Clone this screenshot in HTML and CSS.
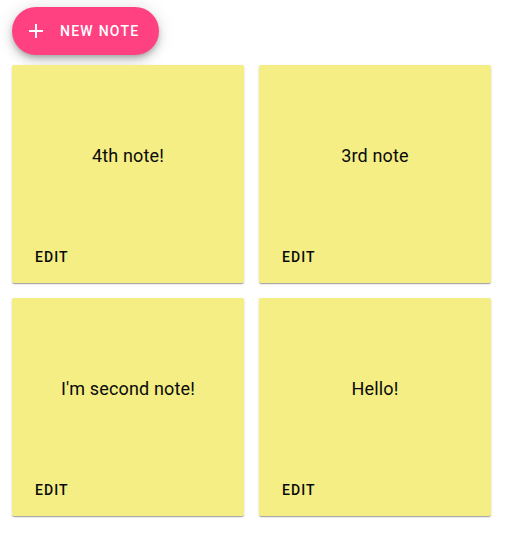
FILE: index.html
```html
<!DOCTYPE html>
<html>
<head>
<meta charset="utf-8">
<link rel="stylesheet" href="styles.css">
</head>
<body>
<div class="app">
  <button class="fab">
    <svg class="fab-icon" viewBox="0 0 24 24" width="24" height="24"><path d="M19 13h-6v6h-2v-6H5v-2h6V5h2v6h6v2z" fill="#fff"/></svg>
    <span>New note</span>
  </button>
  <div class="notes">
    <div class="card"><div class="note-body">4th note!</div><div class="actions"><span class="edit">Edit</span></div></div>
    <div class="card"><div class="note-body">3rd note</div><div class="actions"><span class="edit">Edit</span></div></div>
    <div class="card"><div class="note-body">I'm second note!</div><div class="actions"><span class="edit">Edit</span></div></div>
    <div class="card"><div class="note-body">Hello!</div><div class="actions"><span class="edit">Edit</span></div></div>
  </div>
</div>
</body>
</html>
```

FILE: styles.css
```css
html, body {
  margin: 0;
  padding: 0;
  background: #fff;
  font-family: Roboto, "Liberation Sans", sans-serif;
}
.app {
  padding: 7px 12px;
}
.fab {
  display: flex;
  align-items: center;
  height: 48px;
  border: none;
  border-radius: 24px;
  background: #ff4081;
  color: #fff;
  padding: 0 20px 0 12px;
  font-family: Roboto, "Liberation Sans", sans-serif;
  font-size: 14px;
  font-weight: 500;
  letter-spacing: 1.25px;
  text-transform: uppercase;
  box-shadow: 0 3px 5px -1px rgba(0,0,0,0.2), 0 6px 10px 0 rgba(0,0,0,0.14), 0 1px 18px 0 rgba(0,0,0,0.12);
  cursor: pointer;
}
.fab-icon {
  margin-right: 12px;
  display: block;
}
.notes {
  margin-top: 10px;
  display: grid;
  grid-template-columns: 232px 232px;
  column-gap: 15px;
  row-gap: 15px;
}
.card {
  height: 218px;
  background: #f4ee84;
  border-radius: 2px;
  display: flex;
  flex-direction: column;
  box-shadow: 0 2px 1px -1px rgba(0,0,0,0.2), 0 1px 1px 0 rgba(0,0,0,0.14), 0 1px 3px 0 rgba(0,0,0,0.12);
}
.note-body {
  flex: 1;
  display: flex;
  align-items: center;
  justify-content: center;
  font-size: 18px;
  line-height: 24px;
  letter-spacing: 0.15px;
  color: #0a0a0a;
}
.actions {
  padding: 0 23px 16px;
  line-height: 20px;
}
.edit {
  font-size: 14px;
  font-weight: 500;
  letter-spacing: 1.1px;
  text-transform: uppercase;
  color: #0a0a0a;
}
```
